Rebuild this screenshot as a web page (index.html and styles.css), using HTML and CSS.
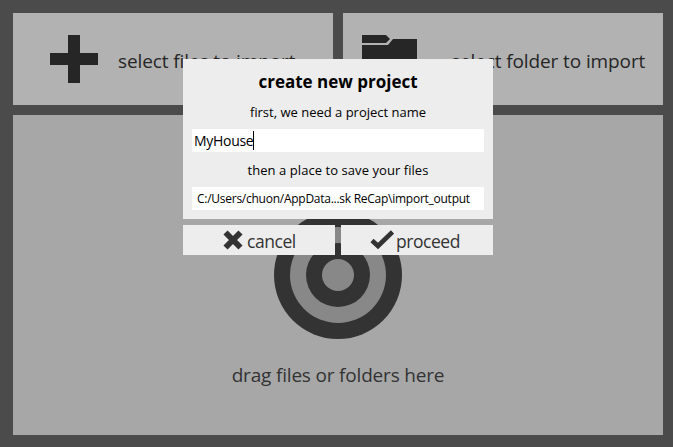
FILE: index.html
```html
<!DOCTYPE html>
<html lang="en">
<head>
<meta charset="utf-8">
<title>create new project</title>
<link rel="stylesheet" href="styles.css">
</head>
<body>
<main class="workspace">
  <div class="tiles">
    <section class="tile files">
      <svg class="plus" width="48" height="48" viewBox="0 0 48 48"><path d="M18 0h12v18h18v12H30v18H18V30H0V18h18z"/></svg>
      <span class="t-files">select files to import</span>
    </section>
    <section class="tile folder">
      <svg class="folder-icon" width="55" height="48" viewBox="0 0 55 48"><path d="M0 0h24l4 4-4 4H0zM0 10h26l5-6h24v44H0z"/></svg>
      <span class="t-folder">select folder to import</span>
    </section>
  </div>
  <section class="drop">
    <svg class="target" width="128" height="128" viewBox="0 0 128 128"><circle class="dark" cx="64" cy="64" r="64"/><circle class="light" cx="64" cy="64" r="48"/><circle class="dark" cx="64" cy="64" r="32"/><circle class="light" cx="64" cy="64" r="16"/></svg>
    <span class="t-drag">drag files or folders here</span>
  </section>
</main>
<div class="dialog">
  <div class="panel">
    <h1><span class="t-title">create new project</span></h1>
    <p class="first"><span class="t-first">first, we need a project name</span></p>
    <div class="field name"><span class="t-name">MyHouse</span><i class="caret"></i></div>
    <p class="then"><span class="t-then">then a place to save your files</span></p>
    <div class="field path"><span class="t-path">C:/Users/chuon/AppData...sk ReCap\import_output</span></div>
  </div>
  <div class="actions">
    <div class="button cancel">
      <svg width="20" height="20" viewBox="0 0 20 20"><path class="cross" d="M2.500 2.500l15 15M17.500 2.500l-15 15"/></svg>
      <span class="t-cancel">cancel</span>
    </div>
    <div class="button proceed">
      <svg width="24" height="20" viewBox="0 0 24 20"><path class="check" d="M2 10.500l6 5.500L22.500 2"/></svg>
      <span class="t-proceed">proceed</span>
    </div>
  </div>
</div>
</body>
</html>
```
FILE: styles.css
```css
* { box-sizing: border-box; }
body {
  margin: 0;
  width: 673px;
  height: 447px;
  overflow: hidden;
  background: #4b4b4b;
  color: #000;
  font-family: "Open Sans", "Noto Sans", sans-serif;
}
span { white-space: pre; }
svg { display: block; flex: none; }
.workspace {
  display: flex;
  flex-direction: column;
  gap: 10px;
  height: 447px;
  padding: 13px 10px 12px 13px;
}
.tiles { display: grid; grid-template-columns: 320px 320px; gap: 10px; height: 92px; }
.tile { display: flex; align-items: center; background: #b2b2b2; color: #262626; font-size: 19px; line-height: 26px; letter-spacing: -0.11px; }
.tile svg { fill: #262626; }
.tile span { padding-top: 3px; }
.files { padding-left: 37px; gap: 20px; }
.folder { padding-left: 19px; gap: 34px; }
.drop {
  display: flex;
  flex-direction: column;
  align-items: center;
  width: 650px;
  height: 320px;
  padding-top: 96px;
  gap: 23px;
  background: #a7a7a7;
  color: #333;
  font-size: 19px;
  line-height: 26px;
}
.t-drag { letter-spacing: -0.18px; }
.dark { fill: #333; }
.light { fill: #888; }
.dialog { position: absolute; left: 183px; top: 59px; width: 310px; }
.panel { height: 160px; padding: 10px 9px 9px; background: #ededed; }
h1, p { margin: 0; text-align: center; }
h1 { height: 26px; font-size: 17px; line-height: 26px; font-weight: 700; }
p { font-size: 13px; line-height: 18px; }
.first { height: 34px; padding-top: 8px; }
.then { height: 35px; padding-top: 9px; letter-spacing: 0.06px; }
.field { display: flex; align-items: center; height: 23px; background: #fff; }
.name { padding-left: 2px; font-size: 14px; }
.t-name { letter-spacing: -0.3px; }
.path { padding-left: 5px; font-size: 12px; letter-spacing: -0.26px; }
.caret { width: 1px; height: 19px; background: #000; }
.actions { display: flex; gap: 6px; padding-top: 6px; }
.button { display: flex; align-items: center; width: 152px; height: 30px; background: #ededed; color: #333; font-size: 17.5px; line-height: 24px; letter-spacing: -0.45px; }
.button span { padding-top: 2px; }
.cancel { padding-left: 40px; gap: 4px; }
.proceed { padding-left: 29px; gap: 2px; }
.cross { stroke: #333; stroke-width: 5.800; stroke-linecap: butt; fill: none; }
.check { stroke: #333; stroke-width: 4.600; fill: none; }
```
